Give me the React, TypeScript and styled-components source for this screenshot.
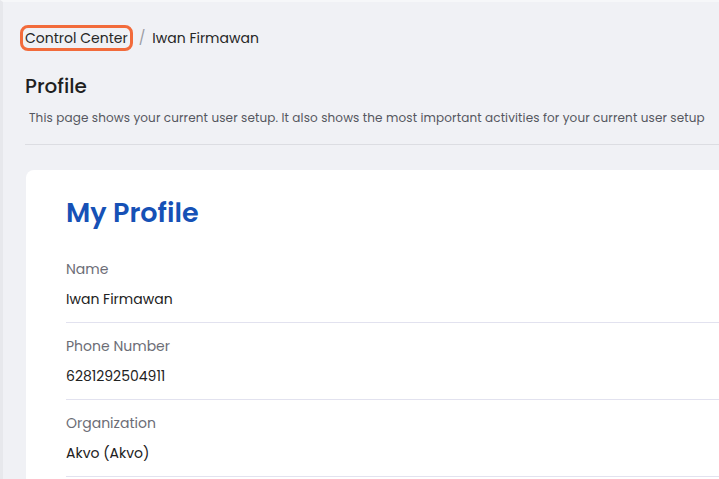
import React from 'react';
import styled, { createGlobalStyle } from 'styled-components';

const GlobalStyle = createGlobalStyle`
  html, body {
    margin: 0;
    padding: 0;
    background: #f0f1f5;
  }
  body {
    font-family: Poppins, 'Open Sans', 'Noto Sans', sans-serif;
    color: #222;
    overflow: hidden;
  }
`;

const Page = styled.div`
  min-height: 100vh;
  box-sizing: border-box;
  background: #f0f1f5;
  border-left: 3px solid #e7e8ec;
  border-top: 2px solid #f6f7f9;
  padding: 23px 0 0 22px;
`;

const Breadcrumb = styled.nav`
  display: flex;
  align-items: center;
  font-size: 14px;
  line-height: 20px;
  color: #262626;
`;

const Crumb = styled.a<{ $focused?: boolean }>`
  display: inline-block;
  padding: 0 2px;
  border: 3px solid ${({ $focused }) => ($focused ? '#f26b3b' : 'transparent')};
  border-radius: 8px;
  color: #262626;
  text-decoration: none;
  margin-left: -5px;
`;

const Separator = styled.span`
  color: #9a9ca3;
  margin: 0 7px 0 6px;
`;

const Current = styled.span`
  color: #262626;
`;

const Header = styled.header`
  padding-top: 22px;
  border-bottom: 1px solid #dcdde2;
  padding-bottom: 16px;
`;

const Title = styled.h1`
  margin: 0;
  font-size: 20px;
  font-weight: 500;
  line-height: 26px;
  color: #1f1f1f;
`;

const Description = styled.p`
  margin: 9px 0 0 4px;
  font-size: 12px;
  letter-spacing: 0.12px;
  line-height: 20px;
  color: #555760;
  white-space: nowrap;
`;

const Card = styled.section`
  margin-top: 25px;
  margin-left: 1px;
  background: #fff;
  border-radius: 8px 0 0 0;
  padding: 24px 0 0 40px;
  min-height: 400px;
`;

const CardTitle = styled.h2`
  margin: 0 0 27px;
  font-size: 27px;
  font-weight: 600;
  line-height: 38px;
  color: #1651b6;
`;

const Field = styled.div`
  border-bottom: 1px solid #e2e2ef;
  padding: 13px 0 13px;
  &:first-of-type {
    padding-top: 0;
  }
`;

const Label = styled.div`
  font-size: 14px;
  line-height: 20px;
  color: #6c6d76;
`;

const Value = styled.div`
  margin-top: 10px;
  font-size: 14px;
  line-height: 20px;
  color: #222;
`;

const fields = [
  { label: 'Name', value: 'Iwan Firmawan' },
  { label: 'Phone Number', value: '6281292504911' },
  { label: 'Organization', value: 'Akvo (Akvo)' },
];

export default function App() {
  return (
    <>
      <GlobalStyle />
      <Page>
        <Breadcrumb>
          <Crumb href="#" $focused>
            Control Center
          </Crumb>
          <Separator>/</Separator>
          <Current>Iwan Firmawan</Current>
        </Breadcrumb>
        <Header>
          <Title>Profile</Title>
          <Description>
            This page shows your current user setup. It also shows the most important
            activities for your current user setup
          </Description>
        </Header>
        <Card>
          <CardTitle>My Profile</CardTitle>
          {fields.map((f) => (
            <Field key={f.label}>
              <Label>{f.label}</Label>
              <Value>{f.value}</Value>
            </Field>
          ))}
        </Card>
      </Page>
    </>
  );
}
